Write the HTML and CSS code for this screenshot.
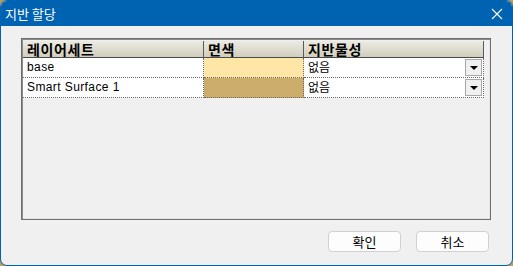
FILE: index.html
```html
<!DOCTYPE html>
<html>
<head>
    <link rel="stylesheet" href="styles.css">
</head>
<body>
<div class="window">
    <div class="titlebar">
        <span class="title">지반 할당</span>
        <svg class="close" width="12" height="12" viewBox="0 0 12 12">
            <path d="M1 1L11 11M11 1L1 11" stroke="#fff" stroke-width="1.1" fill="none"/>
        </svg>
    </div>
    <div class="content">
        <div class="grid">
            <div class="row head">
                <div class="cell">레이어세트</div>
                <div class="cell">면색</div>
                <div class="cell">지반물성</div>
            </div>
            <div class="row">
                <div class="cell">base</div>
                <div class="cell swatch light"></div>
                <div class="cell combo">없음<span class="drop"></span></div>
            </div>
            <div class="row">
                <div class="cell">Smart Surface 1</div>
                <div class="cell swatch dark"></div>
                <div class="cell combo">없음<span class="drop"></span></div>
            </div>
        </div>
        <div class="buttons">
            <button>확인</button>
            <button>취소</button>
        </div>
    </div>
</div>
</body>
</html>
```

FILE: styles.css
```css
body {
    margin: 0;
    padding: 0;
    background: #b89a5e;
    font-family: "Noto Sans CJK KR", "Liberation Sans", sans-serif;
}

.window {
    width: 513px;
    height: 266px;
    box-sizing: border-box;
    border: 1px solid #0063b1;
    border-radius: 7px;
    background: #f0f0f0;
    display: flex;
    flex-direction: column;
    overflow: hidden;
}

.titlebar {
    height: 25px;
    background: #0063b1;
    color: #fff;
    display: flex;
    align-items: center;
    justify-content: space-between;
    padding: 0 9px 0 4px;
}

.title {
    font-size: 13px;
}

.content {
    flex: 1;
    display: flex;
    flex-direction: column;
    padding: 12px 21px 13px 20px;
}

.grid {
    height: 182px;
    box-sizing: border-box;
    border: 1px solid #6e6e6e;
    box-shadow: inset 1px 1px #8a8a8a, inset -1px -1px #e4e4e4;
    padding: 2px 6px 2px 1px;
}

.row {
    display: grid;
    grid-template-columns: 181px 100px 180px;
    height: 20px;
    font-size: 12px;
    line-height: 14px;
}

.row .cell {
    background: #fff;
    border-right: 1px dotted #6a6a6a;
    border-bottom: 1px dotted #6a6a6a;
    padding: 2px 4px 0;
    white-space: nowrap;
    font-family: "Liberation Sans", "Noto Sans CJK KR", sans-serif;
    font-size: 12px;
    letter-spacing: 0.4px;
}

.row .combo {
    position: relative;
    font-family: "Noto Sans CJK KR", sans-serif;
    font-size: 12px;
    letter-spacing: 0;
}

.head {
    height: 17px;
}

.head .cell {
    background: linear-gradient(#ecebe3, #d2cebd);
    border-right: 1px solid #5a5a5a;
    border-bottom: 1px solid #4a4a4a;
    font-family: "Noto Sans CJK KR", sans-serif;
    font-weight: bold;
    font-size: 14px;
    letter-spacing: 0.6px;
    line-height: 16px;
    padding: 0 4px;
}

.swatch.light {
    background: #fde6a6;
}

.swatch.dark {
    background: #cdad6c;
}

.drop {
    position: absolute;
    right: 1px;
    top: 1px;
    width: 15px;
    height: 15px;
    border: 1px solid #a8a8a8;
    background: #f0f0f0;
}

.drop::after {
    content: "";
    position: absolute;
    left: 4px;
    top: 6px;
    border-left: 4px solid transparent;
    border-right: 4px solid transparent;
    border-top: 4px solid #000;
}

.buttons {
    display: flex;
    justify-content: flex-end;
    gap: 15px;
    margin-top: 11px;
    padding-right: 2px;
}

button {
    width: 73px;
    height: 21px;
    background: #fdfdfd;
    border: 1px solid #d0d0d0;
    border-radius: 4px;
    font-family: "Noto Sans CJK KR", sans-serif;
    font-size: 13px;
    padding: 0;
    color: #000;
}
```
